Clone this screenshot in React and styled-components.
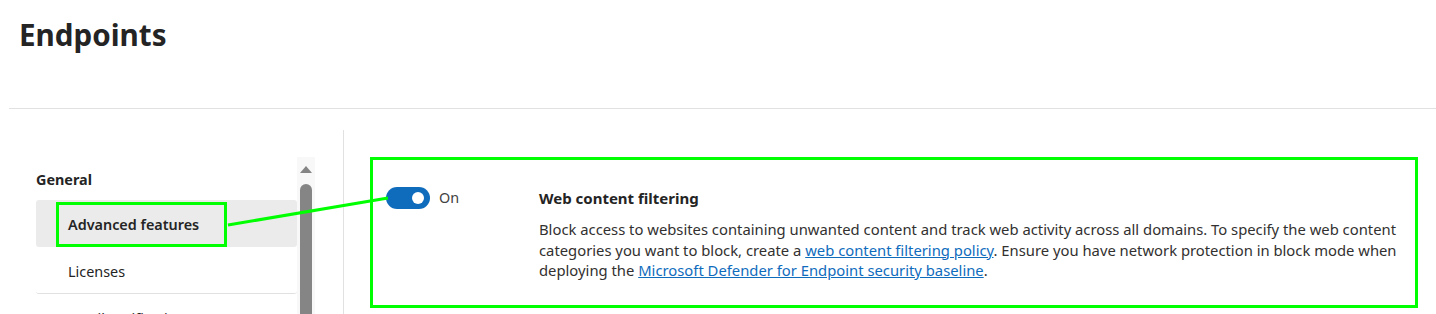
import React from 'react';
import styled, { createGlobalStyle } from 'styled-components';

const GlobalStyle = createGlobalStyle`
  html, body {
    margin: 0;
    padding: 0;
    overflow: hidden;
    background: #ffffff;
  }
  body {
    font-family: "Noto Sans", "Open Sans", sans-serif;
    color: #323130;
  }
`;

const Page = styled.div`
  position: relative;
  width: 1436px;
  height: 314px;
  overflow: hidden;
  padding-left: 9px;
  box-sizing: border-box;
`;

const Header = styled.header`
  height: 109px;
  padding: 13px 0 0 10px;
  box-sizing: border-box;
  border-bottom: 1px solid #e1e1e1;
`;

const Title = styled.h1`
  margin: 0;
  font-size: 29.6px;
  line-height: 44px;
  font-weight: 700;
  color: #242424;
`;

const Body = styled.div`
  display: flex;
`;

const NavColumn = styled.nav`
  margin-top: 21px;
  width: 335px;
  height: 200px;
  box-sizing: border-box;
  padding: 27px 28px 0 27px;
  border-right: 1px solid #e1e1e1;
  display: flex;
`;

const NavList = styled.ul`
  list-style: none;
  margin: 0;
  padding: 13px 0 0;
  width: 262px;
`;

const NavHeading = styled.li`
  font-size: 14.4px;
  line-height: 20px;
  font-weight: 700;
  color: #242424;
  margin-bottom: 10px;
`;

const NavItem = styled.li`
  height: 47px;
  display: flex;
  align-items: center;
  padding-left: 20px;
  border-radius: 3px;
  background: ${({ $active }) => ($active ? '#ebebeb' : 'transparent')};
  border-bottom: ${({ $active }) => ($active ? 'none' : '1px solid #e1e1e1')};
  box-sizing: border-box;
  font-size: 14.4px;
  color: #242424;
`;

const NavLabel = styled.span`
  display: flex;
  align-items: center;
  height: 45px;
  margin-top: 2px;
  padding: 0 25px 0 9px;
  box-sizing: border-box;
  border: 3px solid ${({ $marked }) => ($marked ? '#00ff00' : 'transparent')};
  font-weight: ${({ $active }) => ($active ? 600 : 400)};
`;

const ScrollTrack = styled.div`
  width: 18px;
  background: #f8f8f8;
  display: flex;
  flex-direction: column;
  align-items: center;
  padding-top: 9px;
  box-sizing: border-box;
`;

const ScrollArrow = styled.div`
  width: 0;
  height: 0;
  border-left: 6px solid transparent;
  border-right: 6px solid transparent;
  border-bottom: 7px solid #858585;
  margin-bottom: 11px;
`;

const ScrollThumb = styled.div`
  width: 12px;
  flex: 1;
  background: #858585;
  border-radius: 6px 6px 0 0;
`;

const Main = styled.main`
  flex: 1;
  padding: 48px 18px 0 26px;
`;

const Card = styled.section`
  height: 151px;
  box-sizing: border-box;
  border: 3px solid #00ff00;
  padding: 27px 0 0 13px;
  display: flex;
`;

const ToggleCell = styled.div`
  width: 153px;
  display: flex;
  align-items: flex-start;
  gap: 9px;
`;

const Switch = styled.span`
  position: relative;
  width: 44px;
  height: 22px;
  border-radius: 11px;
  background: #0f6cbd;
  flex-shrink: 0;

  &::after {
    content: '';
    position: absolute;
    top: 5px;
    right: 6px;
    width: 12px;
    height: 12px;
    border-radius: 50%;
    background: #ffffff;
  }
`;

const SwitchText = styled.span`
  font-size: 14.4px;
  line-height: 22px;
  color: #424242;
`;

const Details = styled.div`
  flex: 1;
`;

const SettingTitle = styled.h2`
  margin: 0 0 10px;
  font-size: 15px;
  line-height: 22px;
  font-weight: 700;
  color: #242424;
`;

const Description = styled.p`
  margin: 0;
  font-size: 14.8px;
  line-height: 20.6px;
  color: #323130;
  white-space: nowrap;
`;

const Link = styled.a`
  color: #0f6cbd;
  text-decoration: underline;
`;

const Overlay = styled.svg`
  position: absolute;
  top: 0;
  left: 0;
  pointer-events: none;
`;

export default function App() {
  return (
    <>
      <GlobalStyle />
      <Page>
        <Header>
          <Title>Endpoints</Title>
        </Header>
        <Body>
          <NavColumn>
            <NavList>
              <NavHeading>General</NavHeading>
              <NavItem $active>
                <NavLabel $active $marked>Advanced features</NavLabel>
              </NavItem>
              <NavItem>
                <NavLabel>Licenses</NavLabel>
              </NavItem>
              <NavItem>
                <NavLabel>Email notifications</NavLabel>
              </NavItem>
            </NavList>
            <ScrollTrack>
              <ScrollArrow />
              <ScrollThumb />
            </ScrollTrack>
          </NavColumn>
          <Main>
            <Card>
              <ToggleCell>
                <Switch role="switch" aria-checked="true" />
                <SwitchText>On</SwitchText>
              </ToggleCell>
              <Details>
                <SettingTitle>Web content filtering</SettingTitle>
                <Description>
                  Block access to websites containing unwanted content and track web activity across all
                  domains. To specify the web content
                  <br />
                  categories you want to block, create a{' '}
                  <Link href="#">web content filtering policy</Link>. Ensure you have network protection in
                  block mode when
                  <br />
                  deploying the{' '}
                  <Link href="#">Microsoft Defender for Endpoint security baseline</Link>.
                </Description>
              </Details>
            </Card>
          </Main>
        </Body>
        <Overlay width="1436" height="314">
          <line x1="228" y1="225" x2="388" y2="198" stroke="#00ff00" strokeWidth="3" />
        </Overlay>
      </Page>
    </>
  );
}
